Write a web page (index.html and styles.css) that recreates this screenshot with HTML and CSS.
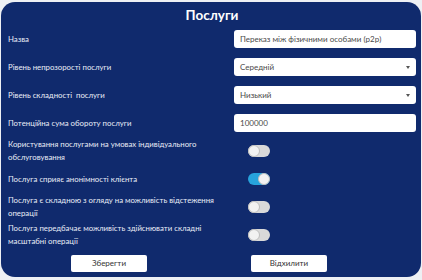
FILE: index.html
```html
<!DOCTYPE html>
<html lang="uk">
<head>
<meta charset="utf-8">
<link rel="stylesheet" href="styles.css">
</head>
<body>
<div class="panel">
  <div class="title">Послуги</div>
  <div class="form">
    <div class="label">Назва</div>
    <div class="field"><div class="input">Переказ між фізичними особами (p2p)</div></div>

    <div class="label">Рівень непрозорості послуги</div>
    <div class="field"><div class="input select">Середній<span class="arrow"></span></div></div>

    <div class="label">Рівень складності&nbsp; послуги</div>
    <div class="field"><div class="input select">Низький<span class="arrow"></span></div></div>

    <div class="label">Потенційна сума обороту послуги</div>
    <div class="field"><div class="input">100000</div></div>

    <div class="label">Користування послугами на умовах індивідуального обслуговування</div>
    <div class="field"><span class="toggle"></span></div>

    <div class="label">Послуга сприяє анонімності клієнта</div>
    <div class="field"><span class="toggle on"></span></div>

    <div class="label">Послуга є складною з огляду на можливість відстеження операції</div>
    <div class="field"><span class="toggle"></span></div>

    <div class="label">Послуга передбачає можливість здійснювати складні масштабні операції</div>
    <div class="field"><span class="toggle"></span></div>

    <div class="btncell left"><button class="btn">Зберегти</button></div>
    <div class="btncell right"><button class="btn">Відхилити</button></div>
  </div>
</div>
</body>
</html>
```
FILE: styles.css
```css
html, body { margin: 0; padding: 0; }
body {
  background: #eef0f4;
  width: 422px;
  height: 280px;
  overflow: hidden;
  font-family: Lato, "Noto Sans", sans-serif;
}
.panel {
  box-sizing: border-box;
  margin: 2px 0 0 1px;
  width: 420px;
  height: 275px;
  background: #102a6d;
  border-radius: 14px;
  padding: 0 5px 0 7px;
  color: #e9edf7;
}
.title {
  height: 28px;
  box-sizing: border-box;
  padding-top: 4px;
  line-height: 18px;
  font-size: 13.5px;
  font-weight: 700;
  text-align: center;
  color: #ffffff;
}
.form {
  display: grid;
  grid-template-columns: 218px 182px;
  column-gap: 8px;
  grid-auto-rows: 18px;
  row-gap: 10px;
}
.label {
  font-size: 7.8px;
  line-height: 13px;
  display: flex;
  align-items: center;
}
.field {
  display: flex;
  align-items: center;
}
.input {
  box-sizing: border-box;
  width: 100%;
  height: 18px;
  background: #ffffff;
  border-radius: 3px;
  padding: 0 6px;
  font-size: 8px;
  line-height: 18px;
  color: #4a4a4a;
  position: relative;
}
.arrow {
  position: absolute;
  right: 6px;
  top: 8px;
  width: 0;
  height: 0;
  border-left: 2.5px solid transparent;
  border-right: 2.5px solid transparent;
  border-top: 3px solid #555;
}
.toggle {
  box-sizing: border-box;
  margin-left: 14px;
  width: 22px;
  height: 12px;
  border-radius: 6px;
  background: #d9d9d9;
  position: relative;
}
.toggle::after {
  content: "";
  position: absolute;
  top: 0;
  left: 0;
  box-sizing: border-box;
  width: 12px;
  height: 12px;
  border-radius: 50%;
  background: #f2f2f2;
  border: 1px solid #bdbdbd;
}
.toggle.on { background: #27a3dc; }
.toggle.on::after { left: 10px; }
.btncell {
  display: flex;
  align-items: center;
}
.btncell.left { padding-left: 63px; }
.btncell.right { padding-left: 17px; }
.btn {
  width: 76px;
  height: 17px;
  background: #ffffff;
  border: none;
  border-radius: 2px;
  font-family: Lato, "Noto Sans", sans-serif;
  font-size: 8px;
  color: #333;
  padding: 0;
}
```
